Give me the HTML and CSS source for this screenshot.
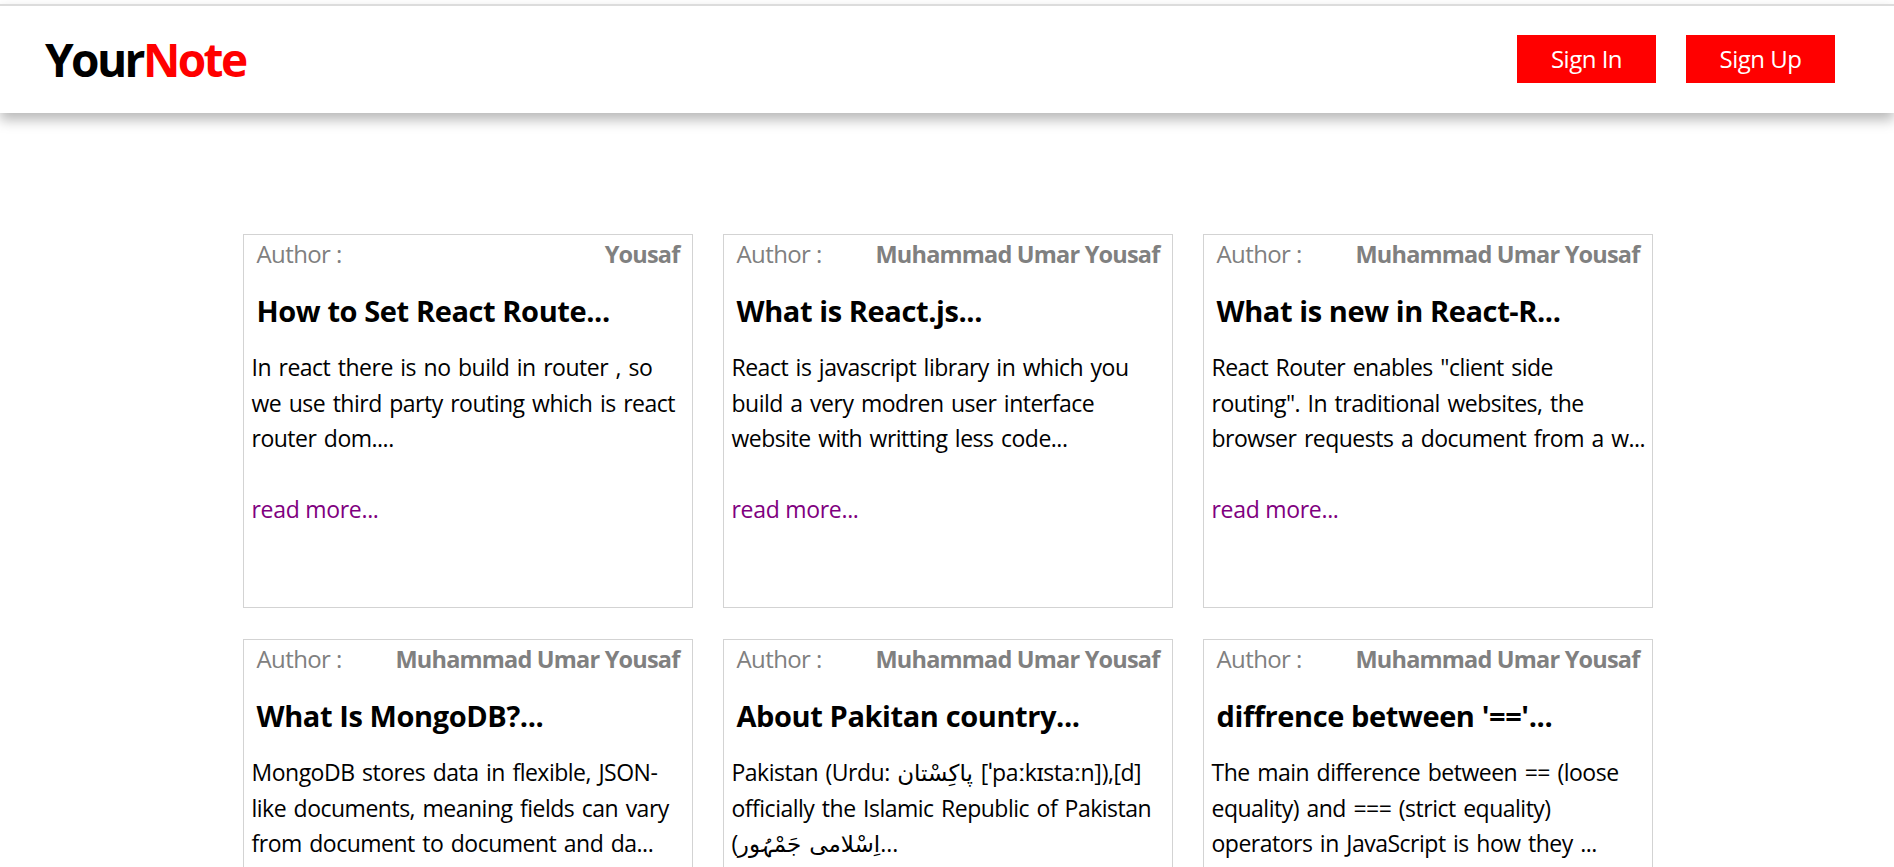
FILE: index.html
```html
<!DOCTYPE html>
<html lang="en">
<head>
<meta charset="utf-8">
<title>YourNote</title>
<link rel="stylesheet" href="styles.css">
</head>
<body>
<header class="topbar">
  <div class="logo"><span class="logo-your">Your</span><span class="logo-note">Note</span></div>
  <nav class="auth">
    <a class="btn btn-in" href="#">Sign In</a>
    <a class="btn btn-up" href="#">Sign Up</a>
  </nav>
</header>
<main class="notes">
  <article class="card">
    <div class="meta"><span class="meta-label">Author :</span><span class="meta-name">Yousaf</span></div>
    <h2 class="title">How to Set React Route...</h2>
    <p class="body">In react there is no build in router , so we use third party routing which is react router dom....</p>
    <a class="more" href="#">read more...</a>
  </article>
  <article class="card">
    <div class="meta"><span class="meta-label">Author :</span><span class="meta-name">Muhammad Umar Yousaf</span></div>
    <h2 class="title">What is React.js...</h2>
    <p class="body">React is javascript library in which you build a very modren user interface website with writting less code...</p>
    <a class="more" href="#">read more...</a>
  </article>
  <article class="card">
    <div class="meta"><span class="meta-label">Author :</span><span class="meta-name">Muhammad Umar Yousaf</span></div>
    <h2 class="title">What is new in React-R...</h2>
    <p class="body">React Router enables "client side routing". In traditional websites, the browser requests a document from a w...</p>
    <a class="more" href="#">read more...</a>
  </article>
  <article class="card">
    <div class="meta"><span class="meta-label">Author :</span><span class="meta-name">Muhammad Umar Yousaf</span></div>
    <h2 class="title">What Is MongoDB?...</h2>
    <p class="body">MongoDB stores data in flexible, JSON-like documents, meaning fields can vary from document to document and da...</p>
    <a class="more" href="#">read more...</a>
  </article>
  <article class="card">
    <div class="meta"><span class="meta-label">Author :</span><span class="meta-name">Muhammad Umar Yousaf</span></div>
    <h2 class="title">About Pakitan country...</h2>
    <p class="body">Pakistan (Urdu: پاکِسْتان [ˈpaːkɪstaːn]),[d] officially the Islamic Republic of Pakistan (اِسْلامی جَمْہُور...</p>
    <a class="more" href="#">read more...</a>
  </article>
  <article class="card">
    <div class="meta"><span class="meta-label">Author :</span><span class="meta-name">Muhammad Umar Yousaf</span></div>
    <h2 class="title">diffrence between '=='...</h2>
    <p class="body">The main difference between == (loose equality) and === (strict equality) operators in JavaScript is how they ...</p>
    <a class="more" href="#">read more...</a>
  </article>
</main>
</body>
</html>
```
FILE: styles.css
```css
html, body {
  margin: 0;
  padding: 0;
  background: #fff;
}
body {
  font-family: "Open Sans", "Noto Sans", "DejaVu Sans", sans-serif;
  color: #000;
  padding-top: 4px;
}
.topbar {
  height: 107px;
  border-top: 2px solid #dcdcdc;
  box-shadow: 0 7px 12px rgba(0, 0, 0, 0.28);
  display: flex;
  align-items: center;
  justify-content: space-between;
  padding: 0 59px 0 45px;
  background: #fff;
  position: relative;
}
.logo {
  font-size: 46px;
  font-weight: 700;
  letter-spacing: -2.6px;
  line-height: 1;
  margin-top: -2px;
}
.logo-your { color: #000; }
.logo-note { color: #ff0000; }
.auth {
  display: flex;
  gap: 30px;
  margin-top: -2px;
}
.btn {
  display: flex;
  align-items: center;
  justify-content: center;
  height: 48px;
  background: #ff0000;
  color: #fff;
  text-decoration: none;
  font-size: 24px;
  letter-spacing: -0.5px;
}
.btn-in { width: 139px; }
.btn-up { width: 149px; }
.notes {
  display: grid;
  grid-template-columns: repeat(3, 450px);
  gap: 31px 30px;
  justify-content: center;
  margin-top: 121px;
  padding-left: 1px;
}
.card {
  box-sizing: border-box;
  height: 374px;
  border: 1px solid #d3d3d3;
  padding: 2px 0 0 8px;
}
.meta {
  display: flex;
  justify-content: space-between;
  padding: 0 12px 0 5px;
  font-size: 24px;
  line-height: 34px;
  color: #808080;
  letter-spacing: -0.6px;
}
.meta-name {
  font-weight: 700;
  font-size: 23.5px;
  letter-spacing: -0.8px;
}
.title {
  margin: 20px 0 0 5px;
  font-size: 29px;
  line-height: 40px;
  font-weight: 700;
  letter-spacing: -0.4px;
}
.body {
  width: 435.5px;
  margin: 19px 0 0;
  font-size: 23px;
  line-height: 35.5px;
  letter-spacing: -0.5px;
  word-spacing: 2px;
}
.more {
  display: block;
  margin-top: 35px;
  font-size: 23px;
  line-height: 35.5px;
  color: #800080;
  text-decoration: none;
  letter-spacing: -0.3px;
}
```
